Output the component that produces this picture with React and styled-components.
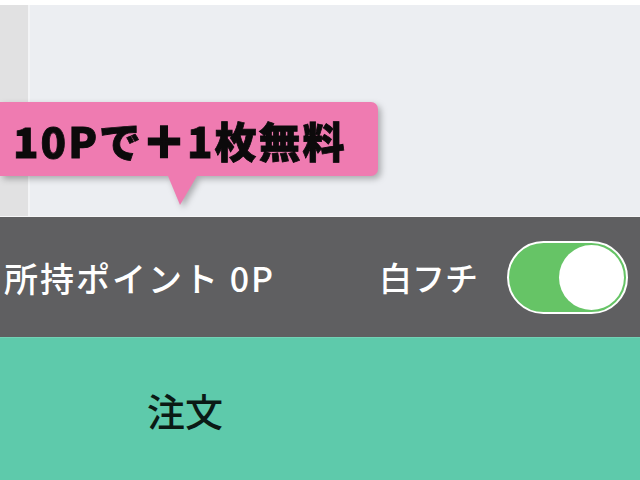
import React, { useState } from "react";
import styled, { createGlobalStyle } from "styled-components";

const GlobalStyle = createGlobalStyle`
  html, body {
    margin: 0;
    padding: 0;
    width: 640px;
    height: 480px;
    overflow: hidden;
    font-family: "Noto Sans CJK JP", "Noto Sans", sans-serif;
  }
`;

const Screen = styled.div`
  width: 640px;
  height: 480px;
  display: flex;
  flex-direction: column;
  background: #eceef2;
`;

const TopStrip = styled.div`
  height: 5px;
  background: #ffffff;
`;

const Hero = styled.div`
  position: relative;
  height: 211px;
  display: flex;
  border-bottom: 1px solid #f6f6f7;
`;

const LeftRail = styled.div`
  width: 28px;
  background: #e1e1e2;
  border-right: 2px solid #f3f4f6;
`;

const HeroMain = styled.div`
  flex: 1;
  background: #eceef2;
`;

/* speech bubble laid over the hero */
const Bubble = styled.div`
  position: absolute;
  left: 0;
  top: 97px;
  filter: drop-shadow(3px 3px 3px rgba(0, 0, 0, 0.28));
`;

const BubbleBody = styled.div`
  width: 365px;
  height: 74px;
  padding-left: 13px;
  display: flex;
  align-items: center;
  background: #ef7bb1;
  border-radius: 0 7px 7px 0;
  font-size: 42px;
  font-weight: 900;
  letter-spacing: 2px;
  color: #0c0a0b;
  -webkit-text-stroke: 0.8px #0c0a0b;
  white-space: nowrap;
`;

const Plus = styled.span`
  -webkit-text-stroke: 3px #0c0a0b;
`;

const BubbleTail = styled.div`
  margin-left: 168px;
  width: 0;
  height: 0;
  border-left: 12px solid transparent;
  border-right: 17px solid transparent;
  border-top: 29px solid #ef7bb1;
`;

const PointBar = styled.div`
  height: 120px;
  background: #5f5f61;
  display: flex;
  align-items: center;
  justify-content: space-between;
  padding: 0 12px 0 4px;
  color: #ffffff;
`;

const PointText = styled.div`
  font-size: 34px;
  font-weight: 500;
  letter-spacing: 2px;
  white-space: nowrap;
`;

const SwitchGroup = styled.div`
  display: flex;
  align-items: center;
  gap: 29px;
`;

const SwitchLabel = styled.span`
  font-size: 33px;
  font-weight: 500;
  white-space: nowrap;
`;

const Toggle = styled.button`
  width: 121px;
  height: 73px;
  padding: 0 2px;
  box-sizing: border-box;
  border: 2px solid #ffffff;
  border-radius: 37px;
  background: ${(p) => (p.$on ? "#66c466" : "#8a8a8c")};
  display: flex;
  align-items: center;
  justify-content: ${(p) => (p.$on ? "flex-end" : "flex-start")};
  cursor: pointer;
`;

const Knob = styled.span`
  width: 65px;
  height: 65px;
  border-radius: 50%;
  background: #ffffff;
`;

const OrderArea = styled.div`
  flex: 1;
  background: #5ecaab;
  border-top: 1px solid #72d1b5;
  display: flex;
  align-items: center;
  padding-left: 147px;
`;

const OrderLabel = styled.span`
  font-size: 38px;
  font-weight: 500;
  color: #0b1a15;
`;

const App = () => {
  const [border, setBorder] = useState(true);

  return (
    <>
      <GlobalStyle />
      <Screen>
        <TopStrip />
        <Hero>
          <LeftRail />
          <HeroMain />
          <Bubble>
            <BubbleBody>
              10Pで<Plus>＋</Plus>1枚無料
            </BubbleBody>
            <BubbleTail />
          </Bubble>
        </Hero>
        <PointBar>
          <PointText>所持ポイント 0P</PointText>
          <SwitchGroup>
            <SwitchLabel>白フチ</SwitchLabel>
            <Toggle $on={border} onClick={() => setBorder(!border)}>
              <Knob />
            </Toggle>
          </SwitchGroup>
        </PointBar>
        <OrderArea>
          <OrderLabel>注文</OrderLabel>
        </OrderArea>
      </Screen>
    </>
  );
};

export default App;
